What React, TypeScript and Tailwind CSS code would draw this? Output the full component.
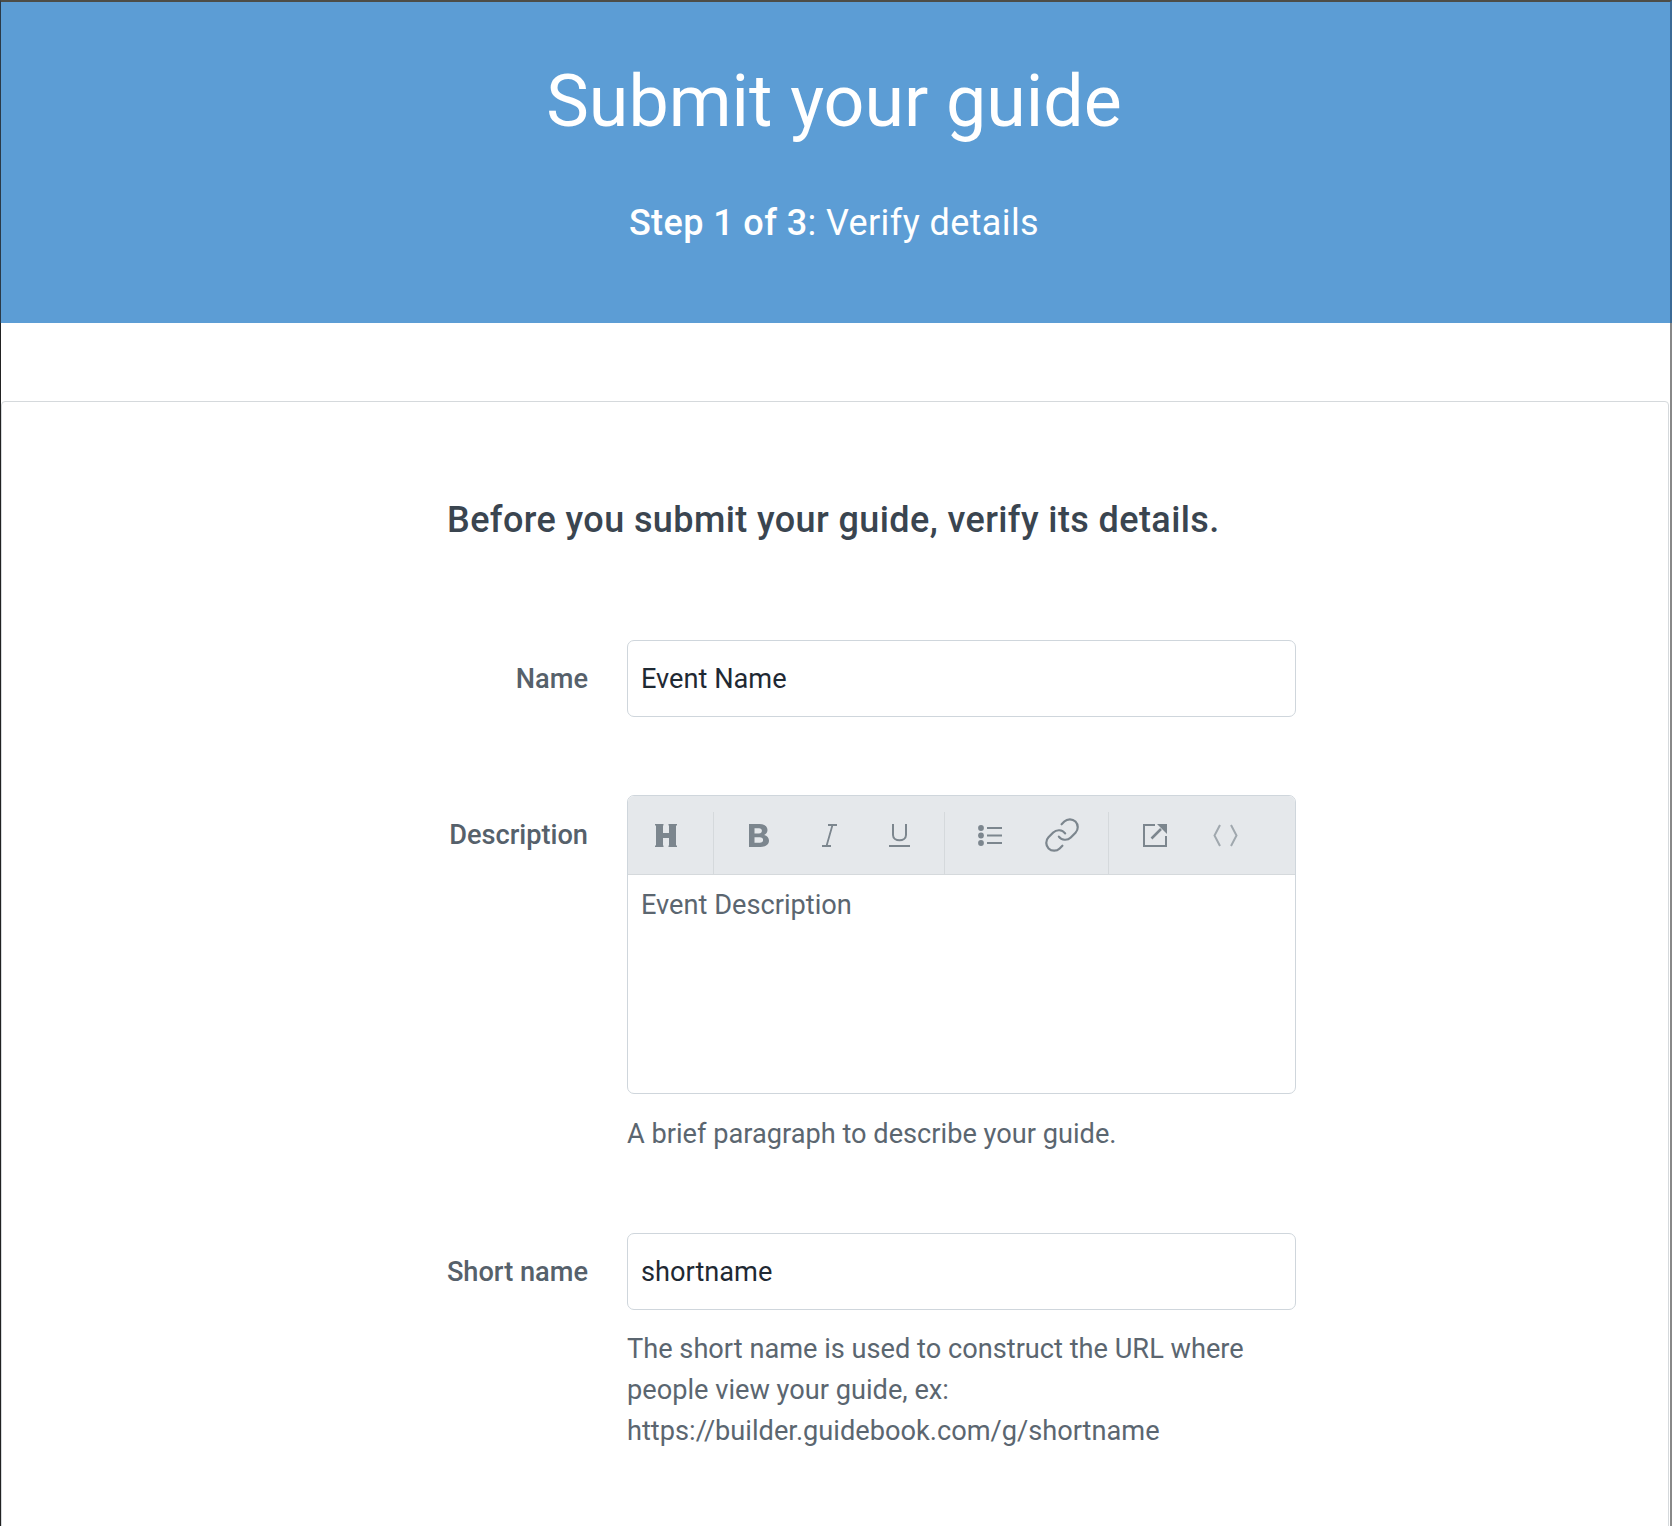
import React from 'react';
import { Link } from 'lucide-react';

const Divider = () => <div className="w-px h-[62px] bg-[#d5d9dc]" />;

const ToolButton = ({ children }: { children: React.ReactNode }) => (
    <div className="w-[70px] h-[62px] pb-[16px] flex items-center justify-center text-[#7c868e]">{children}</div>
);

const HeadingIcon = () => (
    <svg width="22" height="23" viewBox="0 0 22 23" fill="currentColor">
        <path d="M0 0h8.500v1.500H8v7.500h6V1.500h-.5V0H22v1.500h-1v20h1V23h-8.500v-1.500h.5V14H8v7.500h.5V23H0v-1.500h1v-20H0z" />
    </svg>
);

const BoldIcon = () => (
    <svg width="20" height="23" viewBox="0 0 20 23" fill="currentColor" fillRule="evenodd">
        <path d="M0 0h10.500c5 0 8 2.300 8 6 0 2.300-1.200 4-3.300 4.900 2.900.8 4.800 2.900 4.800 5.700C20 20.600 16.800 23 11.500 23H0zM5.500 4.200v5.200h4.500c1.800 0 2.900-1 2.900-2.600s-1.100-2.600-2.900-2.600zM5.500 13.300v5.500h5.300c2 0 3.300-1.100 3.300-2.800s-1.300-2.700-3.300-2.700z" />
    </svg>
);

const ItalicIcon = () => (
    <svg width="15" height="23" viewBox="0 0 15 23" fill="none" stroke="currentColor" strokeWidth="1.8">
        <path d="M6 1h9M0 22h9M10.500 1 4.500 22" />
    </svg>
);

const UnderlineIcon = () => (
    <svg width="21" height="23" viewBox="0 0 21 23" fill="none" stroke="currentColor" strokeWidth="2">
        <path d="M4 0v11c0 7 13 7 13 0V0" />
        <path d="M0 22h21" />
    </svg>
);

const ListIcon = () => (
    <svg width="24" height="21" viewBox="0 0 24 21" fill="currentColor">
        <circle cx="3" cy="3" r="2.900" />
        <circle cx="3" cy="10.500" r="2.900" />
        <circle cx="3" cy="18" r="2.900" />
        <path d="M9 2h15v2H9zM9 9.500h15v2H9zM9 17h15v2H9z" />
    </svg>
);

const ExportIcon = () => (
    <svg width="24" height="23" viewBox="0 0 24 23" fill="none" stroke="currentColor" strokeWidth="2">
        <path d="M12 1H1v21h22V12" />
        <path d="M8.500 14.500 18 5" strokeWidth="2.500" />
        <path d="M14 0h10v10z" fill="currentColor" stroke="none" />
    </svg>
);

const CodeIcon = () => (
    <svg width="25" height="23" viewBox="0 0 25 23" fill="none" stroke="currentColor" strokeWidth="2" className="text-[#a0a8ae]">
        <path d="M7 1 1.500 11.500 7 22M18 1l5.500 10.500L18 22" />
    </svg>
);

const Toolbar = () => (
    <div className="h-[79px] bg-[#e5e8eb] border-b border-[#d5d9dc] flex items-end">
        <div className="pl-[3px] pr-[12px]">
            <ToolButton><HeadingIcon /></ToolButton>
        </div>
        <Divider />
        <div className="flex px-[10px]">
            <ToolButton><BoldIcon /></ToolButton>
            <ToolButton><ItalicIcon /></ToolButton>
            <ToolButton><UnderlineIcon /></ToolButton>
        </div>
        <Divider />
        <div className="flex gap-[2px] pl-[10px] pr-[11px]">
            <ToolButton><ListIcon /></ToolButton>
            <ToolButton><Link size={38} strokeWidth={1.4} /></ToolButton>
        </div>
        <Divider />
        <div className="flex px-[11px]">
            <ToolButton><ExportIcon /></ToolButton>
            <ToolButton><CodeIcon /></ToolButton>
        </div>
    </div>
);

const App: React.FC = () => {
    return (
        <div className="h-[1526px] overflow-hidden bg-white font-['Roboto',sans-serif] text-[#56616b] text-[27.2px]">
            <div className="h-[323px] bg-[#5c9dd5] border-t-2 border-t-[#4d4d47] border-l border-l-[#2a3a48] border-r-2 border-r-[#3b6a96] pr-[3px] flex flex-col items-center text-white">
                <h1 className="mt-[55px] text-[71.7px] leading-[90px]">Submit your guide</h1>
                <p className="mt-[54px] text-[36px] leading-[44px] tracking-[0.4px]"><span className="font-medium">Step 1 of 3</span>: Verify details</p>
            </div>

            <div className="h-[1203px] pt-[78px] border-l border-l-[#222222] border-r-2 border-r-[#888888]">
                <div className="h-[1200px] mr-[1px] border border-[#d5d9dc] rounded-[4px]">
                    <div className="ml-[445px] w-[850px]">
                        <h2 className="mt-[96px] text-[36px] leading-[44px] font-medium text-[#3a4550] tracking-[0.4px] whitespace-nowrap">Before you submit your guide, verify its details.</h2>

                        <div className="mt-[98px] grid grid-cols-[141px_669px] gap-x-[39px]">
                            <label className="h-[77px] pt-[2px] flex items-center justify-end font-medium whitespace-nowrap">Name</label>
                            <div className="h-[77px] pt-[2px] border border-[#cfd6dc] rounded-[7px] px-[13px] flex items-center text-[#1f2933]">Event Name</div>

                            <label className="mt-[78px] h-[78px] pt-[2px] flex items-center justify-end font-medium whitespace-nowrap">Description</label>
                            <div className="mt-[78px]">
                                <div className="h-[299px] border border-[#cfd6dc] rounded-[7px] overflow-hidden">
                                    <Toolbar />
                                    <p className="px-[13px] pt-[9px] leading-[42px] text-[#5b6670]">Event Description</p>
                                </div>
                                <p className="mt-[20px] leading-[41px] text-[#5b6670]">A brief paragraph to describe your guide.</p>
                            </div>

                            <label className="mt-[78px] h-[77px] pt-[2px] flex items-center justify-end font-medium whitespace-nowrap">Short name</label>
                            <div className="mt-[78px]">
                                <div className="h-[77px] pt-[2px] border border-[#cfd6dc] rounded-[7px] px-[13px] flex items-center text-[#1f2933]">shortname</div>
                                <p className="mt-[19px] leading-[41px] text-[#5b6670]">
                                    The short name is used to construct the URL where<br />
                                    people view your guide, ex:<br />
                                    https://builder.guidebook.com/g/shortname
                                </p>
                            </div>
                        </div>
                    </div>
                </div>
            </div>
        </div>
    );
};

export default App;
